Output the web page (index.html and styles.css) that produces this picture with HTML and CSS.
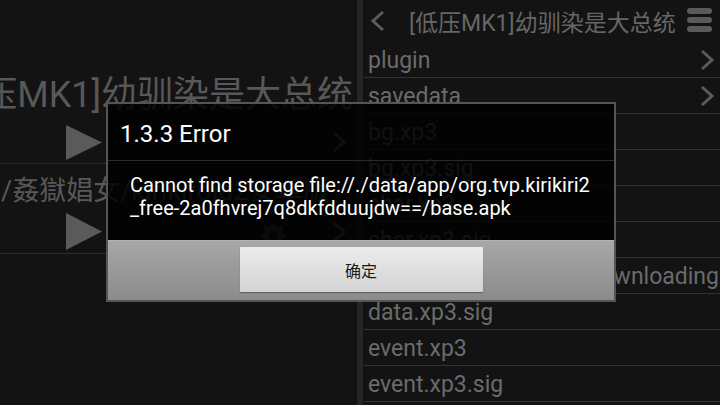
FILE: index.html
```html
<!DOCTYPE html>
<html lang="zh">
<head>
<meta charset="utf-8">
<title>kirikiroid2</title>
<link rel="stylesheet" href="styles.css">
</head>
<body>
<div class="screen">
  <div class="left">
    <div class="entry">
      <div class="entry-title big"><span>[低压MK1]幼驯染是大总统</span></div>
      <div class="entry-actions first">
        <svg class="play" width="36" height="35" viewBox="0 0 36 35"><polygon points="0,0 36,17.5 0,35"/></svg>
        <span class="grow"></span>
        <svg class="chev" width="14" height="22" viewBox="0 0 14 22"><polyline points="2,2 12,11 2,20"/></svg>
      </div>
    </div>
    <div class="entry">
      <div class="entry-title small"><span>/姦獄娼女/kirikiroid2安卓版</span></div>
      <div class="entry-actions second">
        <svg class="play" width="36" height="37" viewBox="0 0 36 37"><polygon points="0,0 36,18.5 0,37"/></svg>
        <span class="grow"></span>
        <svg class="gear" width="27" height="27" viewBox="0 0 24 24"><path d="M10.3 1h3.4l.5 3 1.9.8 2.5-1.8 2.4 2.4-1.8 2.5.8 1.9 3 .5v3.4l-3 .5-.8 1.9 1.8 2.5-2.4 2.4-2.5-1.8-1.9.8-.5 3h-3.4l-.5-3-1.9-.8-2.5 1.8-2.4-2.4 1.8-2.5-.8-1.9-3-.5v-3.4l3-.5.8-1.9-1.8-2.5 2.4-2.4 2.5 1.8 1.9-.8zM12 8a4 4 0 1 0 0 8 4 4 0 1 0 0-8z"/></svg>
        <svg class="chev" width="14" height="22" viewBox="0 0 14 22"><polyline points="2,2 12,11 2,20"/></svg>
      </div>
    </div>
  </div>
  <div class="divider"></div>
  <div class="right">
    <div class="bar">
      <svg class="back" width="16" height="22" viewBox="0 0 16 22"><polyline points="13,2 3,11 13,20"/></svg>
      <span class="bar-title">[低压MK1]幼驯染是大总统</span>
      <span class="grow"></span>
      <svg class="menu" width="25" height="24" viewBox="0 0 25 24"><rect x="0" y="0" width="25" height="6" rx="3"/><rect x="0" y="9" width="25" height="6" rx="3"/><rect x="0" y="18" width="25" height="6" rx="3"/></svg>
    </div>
    <ul class="files">
      <li class="folder"><span>plugin</span><svg class="chev" width="14" height="22" viewBox="0 0 14 22"><polyline points="2,2 12,11 2,20"/></svg></li>
      <li class="folder"><span>savedata</span><svg class="chev" width="14" height="22" viewBox="0 0 14 22"><polyline points="2,2 12,11 2,20"/></svg></li>
      <li><span>bg.xp3</span></li>
      <li><span>bg.xp3.sig</span></li>
      <li><span>char.xp3</span></li>
      <li><span>char.xp3.sig</span></li>
      <li class="tail"><span>data.xp3 - need downloading</span></li>
      <li><span>data.xp3.sig</span></li>
      <li><span>event.xp3</span></li>
      <li><span>event.xp3.sig</span></li>
    </ul>
  </div>
</div>

<div class="dialog">
  <div class="dlg-title">1.3.3 Error</div>
  <div class="dlg-body">Cannot find storage file://./data/app/org.tvp.kirikiri2<br>_free-2a0fhvrej7q8dkfdduujdw==/base.apk</div>
  <div class="dlg-buttons">
    <button class="dlg-btn">确定</button>
  </div>
</div>
</body>
</html>
```
FILE: styles.css
```css
* { box-sizing: border-box; }
html, body {
  margin: 0;
  padding: 0;
  width: 720px;
  height: 405px;
  overflow: hidden;
  background: #131313;
  font-family: Roboto, "Noto Sans CJK SC", sans-serif;
}
.screen {
  display: flex;
  height: 405px;
}
.grow { flex: 1; }

/* left panel */
.left {
  width: 357px;
  flex: none;
  overflow: hidden;
  padding-top: 71px;
}
.entry-title {
  display: flex;
  white-space: nowrap;
  overflow: hidden;
  color: #585858;
}
.entry-title.big {
  justify-content: flex-end;
  height: 48px;
  line-height: 48px;
  font-size: 36px;
  padding-right: 4px;
}
.entry-title.small {
  height: 46px;
  padding-top: 9px;
  line-height: 36px;
  font-size: 27px;
  padding-left: 1px;
}
.entry-actions {
  display: flex;
  align-items: flex-start;
  padding-left: 66px;
  padding-right: 11px;
  border-bottom: 1px solid #2b2b2b;
}
.entry-actions.first { height: 45px; padding-top: 6px; }
.entry-actions.second { height: 44px; padding-top: 3px; }
.play { fill: #5a5a5a; flex: none; }
.entry-actions .chev { margin-top: 6px; }
.entry-actions.second .chev { margin-top: 8px; }
.gear { fill: #404040; margin-top: 9px; margin-right: 45px; }
.chev {
  fill: none;
  stroke: #5c5c5c;
  stroke-width: 3;
  flex: none;
}

.divider {
  width: 6px;
  flex: none;
  background: #252525;
}

/* right panel */
.right {
  flex: 1;
  min-width: 0;
  overflow: hidden;
}
.bar {
  display: flex;
  align-items: center;
  height: 42px;
  padding-left: 7px;
  padding-right: 8px;
}
.back {
  fill: none;
  stroke: #5c5c5c;
  stroke-width: 3;
  flex: none;
}
.bar-title {
  margin-left: 23px;
  font-size: 23px;
  color: #666;
  white-space: nowrap;
}
.menu { fill: #5a5a5a; flex: none; margin-top: -2px; }
.files {
  list-style: none;
  margin: 0;
  padding: 0 0 0 1px;
}
.files li {
  display: flex;
  align-items: center;
  height: 36px;
  line-height: 32px;
  border-bottom: 1px solid #333;
  padding-top: 3px;
  padding-left: 4px;
  padding-right: 6px;
  font-size: 23px;
  color: #6b6b6b;
  white-space: nowrap;
  overflow: hidden;
}
.files li .chev { margin-top: -2px; }
.files li.folder { justify-content: space-between; }
.files li.tail { justify-content: flex-end; padding-right: 1px; }

/* dialog */
.dialog {
  position: absolute;
  left: 106px;
  top: 102px;
  width: 510px;
  height: 200px;
  border: 2px solid #555;
  display: flex;
  flex-direction: column;
}
.dlg-title {
  height: 57px;
  flex: none;
  background: rgba(0, 0, 0, 0.84);
  border-bottom: 1px solid #2a2a2a;
  color: #fff;
  font-size: 24px;
  line-height: 56px;
  padding-left: 12px;
  padding-top: 2px;
}
.dlg-body {
  height: 79px;
  flex: none;
  background: rgba(0, 0, 0, 0.84);
  color: #fff;
  font-size: 20px;
  line-height: 23px;
  padding: 13px 0 0 22px;
  white-space: nowrap;
}
.dlg-buttons {
  flex: 1;
  display: flex;
  justify-content: center;
  align-items: flex-start;
  padding-top: 6px;
  background: linear-gradient(#a7a7a7, #8b8b8b);
  border-top: 1px solid #b4b4b4;
}
.dlg-btn {
  width: 243px;
  height: 45px;
  border: none;
  border-radius: 1px;
  background: linear-gradient(#ececec, #d3d3d3);
  box-shadow: 0 1px 1px #5e5e5e;
  font-family: "Noto Sans CJK SC", sans-serif;
  font-size: 16px;
  color: #1a1a1a;
  padding: 0;
}
```
